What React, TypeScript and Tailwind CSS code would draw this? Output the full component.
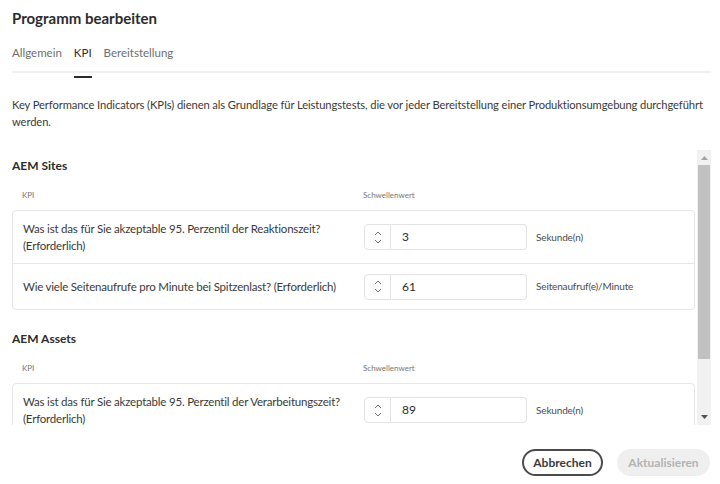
import React from "react";

const font = { fontFamily: "Lato, 'Open Sans', sans-serif" };

function Stepper({ value }: { value: string }) {
  return (
    <div className="flex h-[26px]">
      <div className="w-[27px] h-full border border-[#e3e3e3] rounded-l-[4px] flex flex-col items-center justify-center gap-[3px]">
        <svg width="8" height="5" viewBox="0 0 8 5" fill="none" stroke="#707070" strokeWidth="1">
          <path d="M1 4 L4 1 L7 4" />
        </svg>
        <svg width="8" height="5" viewBox="0 0 8 5" fill="none" stroke="#707070" strokeWidth="1">
          <path d="M1 1 L4 4 L7 1" />
        </svg>
      </div>
      <div className="w-[136px] h-full border border-l-0 border-[#e3e3e3] rounded-r-[4px] flex items-center pl-[11px] text-[12px] text-[#2c2c2c]">
        {value}
      </div>
    </div>
  );
}

function Row({
  text,
  value,
  unit,
  last,
  tall,
}: {
  text: React.ReactNode;
  value: string;
  unit: string;
  last?: boolean;
  tall?: boolean;
}) {
  return (
    <div
      className={`flex items-center ${tall ? "h-[53px]" : "h-[45px]"} ${
        last ? "" : "border-b border-[#e6e6e6]"
      }`}
    >
      <div className="w-[351px] pl-[10px] text-[11.5px] tracking-[-0.2px] leading-[17px] text-[#3a3a3a]">{text}</div>
      <Stepper value={value} />
      <div className="pl-[9px] text-[10px] tracking-[-0.15px] text-[#4b4b4b]">{unit}</div>
    </div>
  );
}

function Section({ title, children }: { title: string; children: React.ReactNode }) {
  return (
    <div>
      <div className="text-[12px] font-bold text-[#2c2c2c] leading-[17px] h-[17px]">{title}</div>
      <div className="flex mt-[15px] h-[12px] items-center text-[8px] text-[#777]">
        <div className="w-[351px] pl-[10px]">KPI</div>
        <div>Schwellenwert</div>
      </div>
      <div className="mt-[9px] border border-[#e6e6e6] rounded-[4px] bg-white">{children}</div>
    </div>
  );
}

export default function App() {
  return (
    <div className="w-[720px] h-[484px] bg-white overflow-hidden flex flex-col pl-3 pr-[9px]" style={font}>
      <div className="pt-[6px] text-[15px] font-bold text-[#2c2c2c] leading-[24px]">Programm bearbeiten</div>
      <div className="mt-[12px] flex gap-[12px] border-b-2 border-[#f0f0f0] h-[31px] text-[11.5px]">
        <div className="text-[#6e6e6e] leading-[22px]">Allgemein</div>
        <div className="text-[#2c2c2c] leading-[22px] relative">
          KPI
          <div className="absolute left-0 right-0 -bottom-[7px] h-[2px] bg-[#2c2c2c]" />
        </div>
        <div className="text-[#6e6e6e] leading-[22px]">Bereitstellung</div>
      </div>
      <div className="mt-[23px] text-[11.2px] tracking-[-0.1px] leading-[17px] text-[#3a3a3a] whitespace-nowrap">
        Key Performance Indicators (KPIs) dienen als Grundlage für Leistungstests, die vor jeder Bereitstellung einer
        Produktionsumgebung durchgeführt
        <br />
        werden.
      </div>
      <div className="mt-[20px] flex h-[275px]">
        <div className="flex-1 overflow-hidden pt-[7px]">
          <div className="pr-[2px]">
            <Section title="AEM Sites">
              <Row
                tall
                text={
                  <>
                    Was ist das für Sie akzeptable 95. Perzentil der Reaktionszeit?
                    <br />
                    (Erforderlich)
                  </>
                }
                value="3"
                unit="Sekunde(n)"
              />
              <Row
                last
                text="Wie viele Seitenaufrufe pro Minute bei Spitzenlast? (Erforderlich)"
                value="61"
                unit="Seitenaufruf(e)/Minute"
              />
            </Section>
            <div className="h-[20px]" />
            <Section title="AEM Assets">
              <Row
                tall
                text={
                  <>
                    Was ist das für Sie akzeptable 95. Perzentil der Verarbeitungszeit?
                    <br />
                    (Erforderlich)
                  </>
                }
                value="89"
                unit="Sekunde(n)"
              />
            </Section>
          </div>
        </div>
        <div className="w-[14px] bg-[#f1f1f1] flex flex-col">
          <div className="h-[15px] flex items-center justify-center">
            <svg width="7" height="4" viewBox="0 0 7 4">
              <path d="M0 4 L3.5 0 L7 4 Z" fill="#a3a3a3" />
            </svg>
          </div>
          <div className="mx-[1px] h-[194px] bg-[#c1c1c1]" />
          <div className="flex-1" />
          <div className="h-[17px] flex items-center justify-center">
            <svg width="7" height="4" viewBox="0 0 7 4">
              <path d="M0 0 L7 0 L3.5 4 Z" fill="#505050" />
            </svg>
          </div>
        </div>
      </div>
      <div className="mt-[24px] flex justify-end gap-[14px] pr-[1px]">
        <div className="h-[27px] w-[81px] rounded-full border-2 border-[#4b4b4b] flex items-center justify-center text-[12px] font-bold text-[#3a3a3a]">
          Abbrechen
        </div>
        <div className="h-[27px] w-[93px] rounded-full bg-[#efefef] flex items-center justify-center text-[12px] font-bold text-[#b3b3b3]">
          Aktualisieren
        </div>
      </div>
    </div>
  );
}
